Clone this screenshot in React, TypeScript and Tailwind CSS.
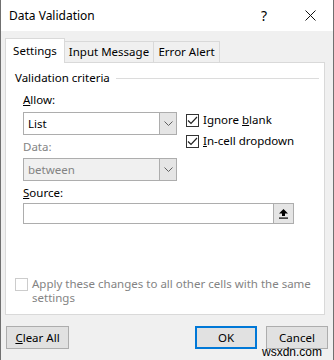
import { useState } from "react";

const font = { fontFamily: '"Segoe UI", "Noto Sans", "Open Sans", sans-serif' };

function Chevron() {
    return (
        <svg width="9" height="5" viewBox="0 0 9 5" fill="none">
            <path d="M0.5 0.5 L4.5 4.5 L8.5 0.5" stroke="#606060" strokeWidth="1" />
        </svg>
    );
}

function Check({ checked, disabled }: { checked: boolean; disabled?: boolean }) {
    return (
        <div className={`w-[13px] h-[13px] shrink-0 border flex items-center justify-center bg-white ${disabled ? "border-[#cccccc]" : "border-[#333333]"}`}>
            {checked && (
                <svg width="11" height="9" viewBox="0 0 11 9" fill="none">
                    <path d="M1 4.5 L4 7.5 L10 1" stroke="#222222" strokeWidth="1.2" />
                </svg>
            )}
        </div>
    );
}

function Select({ value, disabled }: { value: string; disabled?: boolean }) {
    return (
        <div className={`flex h-[23px] w-[154px] shrink-0 border border-[#adadad] ${disabled ? "bg-[#f0f0f0]" : "bg-white"}`}>
            <div className={`flex-1 pl-[4px] leading-[21px] ${disabled ? "text-[#838383]" : "text-black"}`}>{value}</div>
            <div className="w-[17px] bg-[#e5e5e5] border-l border-[#adadad] flex items-center justify-center">
                <Chevron />
            </div>
        </div>
    );
}

export default function App() {
    const [ignoreBlank, setIgnoreBlank] = useState(true);
    const [inCell, setInCell] = useState(true);

    return (
        <div className="w-[334px] h-[360px] bg-[#f0f0f0] border-x border-[#707070] flex flex-col text-[11.5px] leading-[16px] text-black relative" style={font}>
            {/* title bar */}
            <div className="h-[31px] bg-white flex items-center pl-[8px] shrink-0">
                <span className="flex-1 text-[12px]">Data Validation</span>
                <span className="w-[46px] text-center text-[14px]">?</span>
                <span className="w-[46px] flex justify-center">
                    <svg width="11" height="11" viewBox="0 0 11 11">
                        <path d="M0.5 0.5 L10.5 10.5 M10.5 0.5 L0.5 10.5" stroke="#111" strokeWidth="1" />
                    </svg>
                </span>
            </div>

            {/* tabs */}
            <div className="flex pl-[4px] pt-[7px] h-[31px] shrink-0 items-end">
                <div className="h-[25px] w-[60px] justify-center bg-white border border-b-0 border-[#d9d9d9] flex items-center relative -mb-px z-10">Settings</div>
                <div className="h-[21px] w-[89px] justify-center border border-l-0 border-b-0 border-[#d9d9d9] flex items-center">Input Message</div>
                <div className="h-[21px] w-[66px] justify-center border border-l-0 border-b-0 border-[#d9d9d9] flex items-center">Error Alert</div>
            </div>

            {/* panel */}
            <div className="ml-[4px] mr-[8px] h-[253px] shrink-0 bg-white border border-[#d9d9d9] flex flex-col pl-[9px] pr-[5px] pt-[7px]">
                <div className="flex items-center gap-[6px]">
                    <span>Validation criteria</span>
                    <div className="flex-1 h-px bg-[#dcdcdc]" />
                </div>

                <div className="pl-[8px]">
                    <div className="mt-[6px]"><span className="underline">A</span>llow:</div>
                    <div className="flex mt-[4px] gap-[9px] h-[23px] items-start">
                        <Select value="List" />
                        <div className="flex flex-col gap-[5px]">
                            <label className="flex items-center gap-[4px] cursor-pointer" onClick={() => setIgnoreBlank(v => !v)}>
                                <Check checked={ignoreBlank} />
                                <span>Ignore <span className="underline">b</span>lank</span>
                            </label>
                            <label className="flex items-center gap-[4px] cursor-pointer" onClick={() => setInCell(v => !v)}>
                                <Check checked={inCell} />
                                <span><span className="underline">I</span>n-cell dropdown</span>
                            </label>
                        </div>
                    </div>

                    <div className="mt-[4px] text-[#838383]">Data:</div>
                    <div className="mt-[3px]">
                        <Select value="between" disabled />
                    </div>

                    <div className="mt-[4px]"><span className="underline">S</span>ource:</div>
                    <div className="mt-[2px] flex w-[271px] h-[21px] border border-[#adadad] bg-white">
                        <div className="flex-1" />
                        <div className="w-[20px] bg-[#e5e5e5] border-l border-[#adadad] flex items-center justify-center">
                            <svg width="11" height="11" viewBox="0 0 11 11">
                                <path d="M5.5 1 L10 5.5 L7 5.5 L7 8 L4 8 L4 5.5 L1 5.5 Z" fill="#000" />
                                <rect x="1" y="9.5" width="9" height="1.2" fill="#000" />
                            </svg>
                        </div>
                    </div>
                </div>

                <div className="mt-[53px] flex items-start gap-[4px] text-[#838383]">
                    <div className="mt-[1px]"><Check checked={false} disabled /></div>
                    <span className="leading-[14px] w-[288px]">Apply these changes to all other cells with the same settings</span>
                </div>
            </div>

            {/* buttons */}
            <div className="flex items-center px-[5px] mt-[11px]">
                <button className="w-[63px] h-[23px] bg-[#e1e1e1] border border-[#adadad]"><span className="underline">C</span>lear All</button>
                <div className="flex-1" />
                <button className="w-[62px] h-[23px] bg-[#e1e1e1] border-2 border-[#0078d7]">OK</button>
                <button className="w-[62px] h-[23px] bg-[#e1e1e1] border border-[#adadad] ml-[9px]">Cancel</button>
            </div>

            <span className="absolute right-[11px] bottom-[1px] text-[12px] leading-[13px] text-black" style={{ fontFamily: '"Liberation Sans", sans-serif' }}>wsxdn.com</span>
        </div>
    );
}
